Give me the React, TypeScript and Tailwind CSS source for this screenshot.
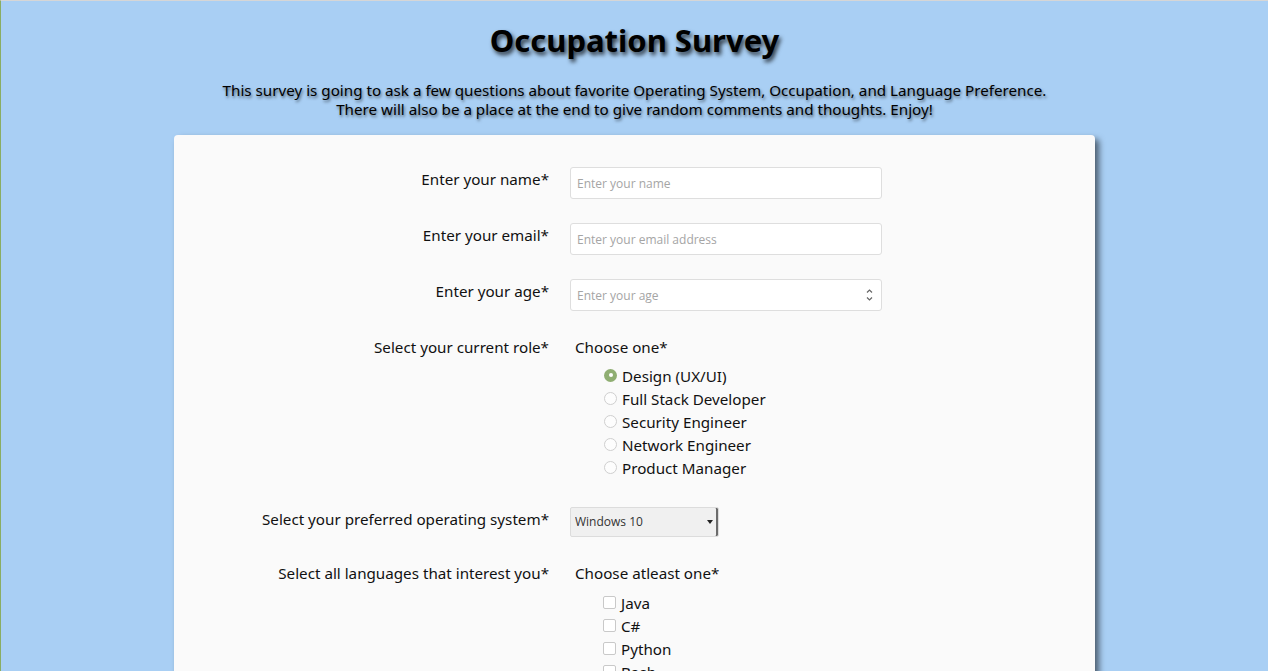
import { useState } from "react";

const roles = ["Design (UX/UI)", "Full Stack Developer", "Security Engineer", "Network Engineer", "Product Manager"];
const languages = ["Java", "C#", "Python", "Bash", "JavaScript"];

const labelFont = "font-['Noto_Sans',sans-serif]";
const inputFont = "font-['Open_Sans','Noto_Sans',sans-serif]";

function Label({ children }: { children: React.ReactNode }) {
  return (
    <div className={`w-[375px] shrink-0 text-right text-[15.2px] leading-6 text-[#111] ${labelFont}`}>
      {children}
    </div>
  );
}

function TextInput({ placeholder, spinner }: { placeholder: string; spinner?: boolean }) {
  return (
    <div className="relative ml-[21px] h-[32px] w-[312px]">
      <input
        type="text"
        placeholder={placeholder}
        className={`h-full w-full rounded-[3px] border border-[#dedede] bg-white px-[6px] text-[12px] text-[#333] outline-none placeholder:text-[#a5a5a5] ${inputFont}`}
      />
      {spinner && (
        <svg className="absolute right-[9px] top-[9px]" width="7" height="14" viewBox="0 0 7 14" fill="none" stroke="#666" strokeWidth="1.2">
          <path d="M1 4.5 L3.5 2 L6 4.5" />
          <path d="M1 9.5 L3.5 12 L6 9.5" />
        </svg>
      )}
    </div>
  );
}

function Radio({ checked }: { checked: boolean }) {
  return checked ? (
    <span className="flex h-[13px] w-[13px] items-center justify-center rounded-full bg-[#8fae72]">
      <span className="block h-[4px] w-[4px] rounded-full bg-white" />
    </span>
  ) : (
    <span className="block h-[13px] w-[13px] rounded-full border border-[#cfcfcf] bg-[#fdfdfd]" />
  );
}

export default function App() {
  const [role, setRole] = useState(0);
  const [langs, setLangs] = useState<number[]>([]);

  return (
    <div className="min-h-screen border-l border-t border-l-[#8aad62] border-t-[#d6d6d6] bg-[#a9cff4] pb-10">
      <header className={`text-center text-black ${labelFont}`}>
        <h1 className="pt-[17px] text-[31px] font-bold leading-[44px] [text-shadow:2px_3px_4px_rgba(0,0,0,0.75)]">
          Occupation Survey
        </h1>
        <p className="mt-[19px] text-[15.2px] leading-[19px] [text-shadow:1px_2px_3px_rgba(0,0,0,0.55)]">
          This survey is going to ask a few questions about favorite Operating System, Occupation, and Language Preference.
          <br />
          There will also be a place at the end to give random comments and thoughts. Enjoy!
        </p>
      </header>

      <form className="mx-auto mt-[16px] w-[921px] rounded-[4px] bg-[#fafafa] pt-[32px] shadow-[4px_4px_6px_rgba(0,0,0,0.55)]">
        <div className="flex items-start">
          <Label>Enter your name*</Label>
          <TextInput placeholder="Enter your name" />
        </div>
        <div className="mt-[24px] flex items-start">
          <Label>Enter your email*</Label>
          <TextInput placeholder="Enter your email address" />
        </div>
        <div className="mt-[24px] flex items-start">
          <Label>Enter your age*</Label>
          <TextInput placeholder="Enter your age" spinner />
        </div>

        <div className="mt-[24px] flex items-start">
          <Label>Select your current role*</Label>
          <div className={`ml-[26px] text-[15.2px] text-[#111] ${labelFont}`}>
            <div className="leading-6">Choose one*</div>
            <ul className="mt-[6px] pl-[29px]">
              {roles.map((r, i) => (
                <li key={r} className="flex h-[23px] items-center gap-[5px] leading-[23px]" onClick={() => setRole(i)}>
                  <span className="-mt-[3px] block">
                    <Radio checked={role === i} />
                  </span>
                  <span>{r}</span>
                </li>
              ))}
            </ul>
          </div>
        </div>

        <div className="mt-[27px] flex items-start">
          <Label>Select your preferred operating system*</Label>
          <div className="relative ml-[21px] h-[30px] w-[149px]">
            <select
              className={`h-full w-full appearance-none rounded-[2px] border border-[#dcdcdc] bg-[#f0f0f0] px-[4px] text-[12px] text-[#333] shadow-[inset_-2px_0_0_#6b6b6b] outline-none ${inputFont}`}
              defaultValue="Windows 10"
            >
              <option>Windows 10</option>
              <option>macOS</option>
              <option>Linux</option>
            </select>
            <span className="pointer-events-none absolute right-[6px] top-[13px] h-0 w-0 border-x-[3px] border-t-[4px] border-x-transparent border-t-[#222]" />
          </div>
        </div>

        <div className="mt-[24px] flex items-start pb-10">
          <Label>Select all languages that interest you*</Label>
          <div className={`ml-[26px] text-[15.2px] text-[#111] ${labelFont}`}>
            <div className="leading-6">Choose atleast one*</div>
            <ul className="mt-[7px] pl-[28px]">
              {languages.map((l, i) => (
                <li
                  key={l}
                  className="flex h-[23px] items-center gap-[5px] leading-[23px]"
                  onClick={() => setLangs(langs.includes(i) ? langs.filter((x) => x !== i) : [...langs, i])}
                >
                  <span className="-mt-[3px] block h-[13px] w-[13px] rounded-[2px] border border-[#c9c9c9] bg-white" />
                  <span>{l}</span>
                </li>
              ))}
            </ul>
          </div>
        </div>
      </form>
    </div>
  );
}
